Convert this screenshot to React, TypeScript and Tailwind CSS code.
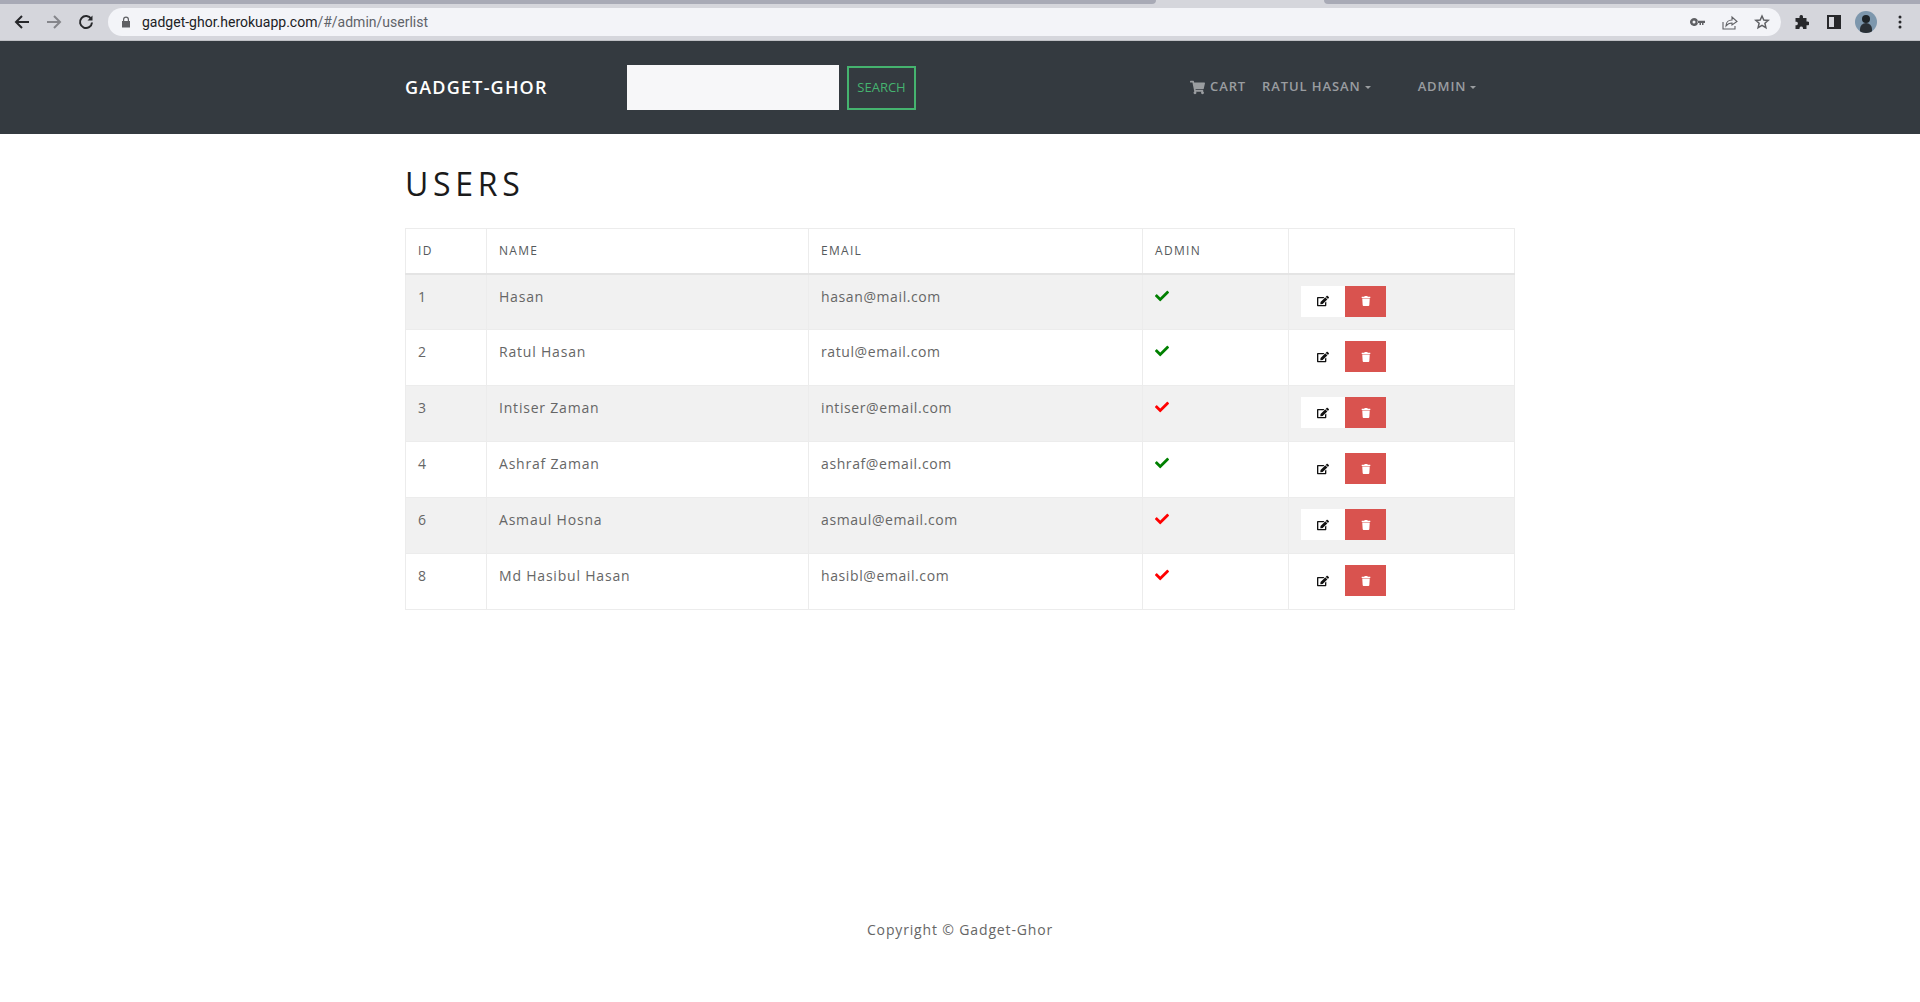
import { FaShoppingCart, FaCheck, FaTrash, FaEdit } from "react-icons/fa";

const users = [
  { id: 1, name: "Hasan", email: "hasan@mail.com", admin: true },
  { id: 2, name: "Ratul Hasan", email: "ratul@email.com", admin: true },
  { id: 3, name: "Intiser Zaman", email: "intiser@email.com", admin: false },
  { id: 4, name: "Ashraf Zaman", email: "ashraf@email.com", admin: true },
  { id: 6, name: "Asmaul Hosna", email: "asmaul@email.com", admin: false },
  { id: 8, name: "Md Hasibul Hasan", email: "hasibl@email.com", admin: false },
];

function Chrome() {
  return (
    <div className="flex h-[41px] flex-col bg-[#d5d6dc] font-['Roboto',sans-serif]">
      <div className="flex h-[4px] bg-[#d5d6dc]">
        <div className="w-[1156px] rounded-br-[6px] bg-[#a8aab6]" />
        <div className="w-[168px]" />
        <div className="flex-1 rounded-bl-[6px] bg-[#a8aab6]" />
      </div>
      <div className="flex h-[36px] items-center">
        <div className="flex w-[108px] items-center text-[#27282b]">
          <svg className="ml-[14px]" width="16" height="16" viewBox="0 0 16 16" fill="none" stroke="#27282b" strokeWidth="2"><path d="M15 8H2M8 2 2 8l6 6" /></svg>
          <svg className="ml-[16px]" width="16" height="16" viewBox="0 0 16 16" fill="none" stroke="#85868b" strokeWidth="2"><path d="M1 8h13M8 2l6 6-6 6" /></svg>
          <svg className="ml-[16px]" width="16" height="16" viewBox="0 0 16 16" fill="none" stroke="#27282b" strokeWidth="2"><path d="M13.2 5A6 6 0 1 0 14 8.5" /><path d="M14.5 1.5v5h-5z" fill="#27282b" stroke="none" /></svg>
        </div>
        <div className="flex h-[28px] w-[1673px] items-center rounded-full bg-[#f3f4f8]">
          <svg className="ml-[13px]" width="10" height="12" viewBox="0 0 10 12"><path d="M2 5V3.5a3 3 0 0 1 6 0V5h1v6.500H1V5zm1.200 0h3.600V3.500a1.800 1.800 0 0 0-3.600 0z" fill="#5f6064" fillRule="evenodd" /></svg>
          <span className="ml-[11px] text-[14px] text-[#202124]">gadget-ghor.herokuapp.com<span className="text-[#5f6368]">/#/admin/userlist</span></span>
          <div className="ml-auto flex items-center">
            <svg width="15" height="9" viewBox="0 0 15 9"><path d="M4 0a4 4 0 1 1-3.800 5.200A4 4 0 0 1 4 0zm0 2.500a1.500 1.500 0 1 0 0 3 1.500 1.500 0 0 0 0-3zM7.500 2.800H15V5h-1.500v2H12V5h-1v2H9.500V5h-2z" fill="#5f6064" fillRule="evenodd" /></svg>
            <svg className="ml-[17px]" width="16" height="15" viewBox="0 0 16 15" fill="none" stroke="#5f6064" strokeWidth="1.100"><path d="M1 7v7h12v-3" /><path d="M4 11c0-4 3-6 6-6V2l5 4.500L10 10V8C7.500 8 5.500 9 4 11z" /></svg>
            <svg className="ml-[16px] mr-[11px]" width="16" height="16" viewBox="0 0 16 16" fill="none" stroke="#5f6064" strokeWidth="1.500"><path d="m8 2 1.800 4 4.400.4-3.300 2.900 1 4.300L8 11.300l-3.900 2.300 1-4.300-3.300-2.900 4.400-.4z" /></svg>
          </div>
        </div>
        <svg className="ml-[13px]" width="15" height="15" viewBox="0 0 15 15"><path d="M5.500 1.500a1.800 1.800 0 0 1 3.500 0V3h3.500v3.500h1a1.900 1.900 0 0 1 0 3.800h-1V14H9v-1a1.800 1.800 0 0 0-3.500 0v1H1.500v-3.800h1a1.800 1.800 0 0 0 0-3.500h-1V3h4z" fill="#27282b" /></svg>
        <svg className="ml-[18px]" width="14" height="14" viewBox="0 0 14 14"><path d="M0 0h14v14H0zm2 2v10h5V2z" fill="#27282b" fillRule="evenodd" /></svg>
        <div className="relative ml-[14px] h-[22px] w-[22px] overflow-hidden rounded-full bg-[#7d97ad]">
          <div className="absolute left-[7px] top-[4px] h-[8px] w-[8px] rounded-full bg-[#1e2428]" />
          <div className="absolute left-[5px] top-[12px] h-[10px] w-[12px] rounded-t-md bg-[#2a3036]" />
        </div>
        <svg className="ml-[21px]" width="4" height="14" viewBox="0 0 4 14" fill="#27282b"><circle cx="2" cy="2" r="1.500" /><circle cx="2" cy="7" r="1.500" /><circle cx="2" cy="12" r="1.500" /></svg>
      </div>
      <div className="h-[1px] bg-[#bfc0c5]" />
    </div>
  );
}

function Caret() {
  return <span className="ml-[4px] inline-block border-x-[3.500px] border-t-[3.500px] border-x-transparent border-t-current align-middle" />;
}

function Navbar() {
  return (
    <nav className="h-[93px] bg-[#343a40]">
      <div className="mx-auto flex h-full w-[1110px] items-center">
        <a className="w-[222px] text-[18px] font-semibold tracking-[1.200px] text-white">GADGET-GHOR</a>
        <div className="h-[45px] w-[212px] bg-[#f7f7f9]" />
        <button className="ml-[8px] h-[44px] w-[69px] border-2 border-[#45b36f] text-[13px] text-[#45b36f]">SEARCH</button>
        <div className="mb-[1px] ml-[274px] flex items-center text-[13px] font-semibold tracking-[0.9px] text-[#9a9da0]">
          <FaShoppingCart className="mr-[5px] text-[15px]" />
          <span>CART</span>
          <span className="ml-[16px]">RATUL HASAN<Caret /></span>
          <span className="ml-[47px]">ADMIN<Caret /></span>
        </div>
      </div>
    </nav>
  );
}

const cell = "border border-[#ececec] px-[12px]";

function Table() {
  return (
    <table className="w-[1109px] table-fixed border-collapse text-[14px] tracking-[0.8px] text-[#666666]">
      <colgroup>
        <col className="w-[81px]" />
        <col className="w-[322px]" />
        <col className="w-[334px]" />
        <col className="w-[146px]" />
        <col className="w-[226px]" />
      </colgroup>
      <thead>
        <tr className="h-[45px] text-[12px] tracking-[1.300px] text-[#55595c]">
          {["ID", "NAME", "EMAIL", "ADMIN", ""].map((h, i) => (
            <th key={i} className={`${cell} border-b-2 border-b-[#e4e4e4] text-left align-middle font-medium`}>{h}</th>
          ))}
        </tr>
      </thead>
      <tbody>
        {users.map((u, i) => (
          <tr key={u.id} className={i % 2 === 0 ? "h-[56px] bg-[#f1f1f1]" : "h-[56px] bg-white"}>
            <td className={`${cell} align-top pt-[11px]`}>{u.id}</td>
            <td className={`${cell} align-top pt-[11px]`}>{u.name}</td>
            <td className={`${cell} align-top pt-[11px] tracking-[0.6px]`}>{u.email}</td>
            <td className={`${cell} align-top pt-[14px]`}>
              <FaCheck className={u.admin ? "text-[14px] text-[#008000]" : "text-[14px] text-[#ff0000]"} />
            </td>
            <td className={`${cell} align-top pt-[11px]`}>
              <div className="flex">
                <button className="flex h-[31px] w-[44px] items-center justify-center bg-white">
                  <FaEdit className="text-[12px] text-[#111]" />
                </button>
                <button className="flex h-[31px] w-[41px] items-center justify-center bg-[#d9534f]">
                  <FaTrash className="text-[10px] text-white" />
                </button>
              </div>
            </td>
          </tr>
        ))}
      </tbody>
    </table>
  );
}

export default function App() {
  return (
    <div className="flex min-h-[1002px] flex-col bg-white font-['Open_Sans',sans-serif]">
      <Chrome />
      <Navbar />
      <main className="mx-auto w-[1110px]">
        <h1 className="mt-[28px] h-[66px] text-[32px] leading-[44px] tracking-[4.700px] text-[#1a1a1a]">USERS</h1>
        <Table />
      </main>
      <footer className="mt-[309px] text-center text-[14px] tracking-[0.85px] text-[#666666]">Copyright © Gadget-Ghor</footer>
    </div>
  );
}
